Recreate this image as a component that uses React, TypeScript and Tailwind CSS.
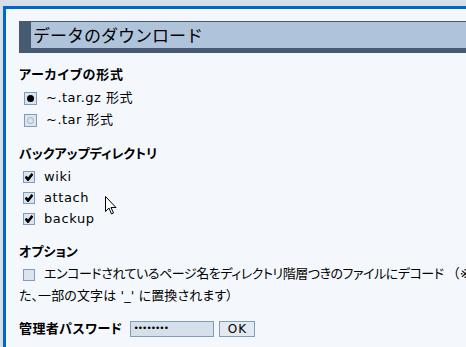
const latin = "font-['DejaVu_Sans','Noto_Sans_CJK_JP',sans-serif]";

function Radio({ checked, disabled }: { checked?: boolean; disabled?: boolean }) {
  return (
    <span className="inline-flex w-[13px] h-[13px] border border-[#7f9cc0] bg-[#dce5ef] items-center justify-center">
      {checked && <span className="w-[7px] h-[7px] rounded-full bg-black" />}
      {disabled && <span className="w-[7px] h-[7px] rounded-full border border-[#a8b0b8]" />}
    </span>
  );
}

function Check({ checked }: { checked?: boolean }) {
  return (
    <span className="inline-flex w-[12px] h-[12px] border border-[#7f9cc0] bg-[#dce5ef] items-center justify-center align-middle">
      {checked && (
        <svg width="8" height="8" viewBox="0 0 8 8">
          <path d="M0.6 3.6 L3 6.6 L7.5 0.8" stroke="#000" strokeWidth="2.6" fill="none" />
        </svg>
      )}
    </span>
  );
}

function Title({ children, wide }: { children: string; wide?: boolean }) {
  return (
    <div className={`h-5 leading-5 font-bold text-[13px] [font-feature-settings:'palt'] ${wide ? "tracking-[0.8px]" : ""}`}>
      {children}
    </div>
  );
}

export default function App() {
  return (
    <div className={`relative w-[466px] h-[347px] overflow-hidden bg-[#d6dee8] pt-[6px] pl-[3px] text-black ${latin}`}>
      <div className="h-full border-l-[3px] border-t-[3px] border-[#0066cc] bg-[#f4f8fc] pl-[13px] pt-[12px]">
        {/* heading */}
        <div className="w-[480px] h-[32px] border-t border-l-[12px] border-b-[5px] border-[#465a72] bg-[#afc4da] pl-[2px] leading-[26px] text-[17px] font-['Noto_Sans_CJK_JP',sans-serif]">
          データのダウンロード
        </div>

        <div className="mt-[12px]">
          <Title wide>アーカイブの形式</Title>
        </div>
        <div className="mt-[2px] pl-[5px]">
          <div className="h-[22px] flex items-center gap-[9px] text-[13px] tracking-[0.5px]">
            <Radio checked />
            <span>~.tar.gz 形式</span>
          </div>
          <div className="h-[22px] flex items-center gap-[9px] text-[13px] tracking-[0.5px]">
            <Radio disabled />
            <span>~.tar 形式</span>
          </div>
        </div>

        <div className="mt-[13px]">
          <Title>バックアップディレクトリ</Title>
        </div>
        <div className="mt-[2px] pl-[4px]">
          {["wiki", "attach", "backup"].map((d) => (
            <div key={d} className="h-[21px] flex items-center gap-[9px] text-[13px] tracking-[0.6px]">
              <Check checked />
              <span>{d}</span>
            </div>
          ))}
        </div>

        <div className="mt-[13px]">
          <Title>オプション</Title>
        </div>
        <div className="mt-px w-[480px] text-[13px] leading-[22px] whitespace-nowrap [font-feature-settings:'palt']">
          <span className="inline-block pl-[4px] pr-[9px]">
            <Check />
          </span>
          <span className="tracking-[-0.45px]">
            エンコードされているページ名をディレクトリ階層つきのファイルにデコード
          </span>
          <span className="pl-[3px] [font-feature-settings:normal]">（※ま</span>
          <br />
          <span className="tracking-[0.1px]">た、一部の文字は '_' に置換されます）</span>
        </div>

        <div className="mt-[12px] h-5 flex items-center">
          <span className="font-bold text-[13px] tracking-[0.4px] [font-feature-settings:'palt'] mr-[8px]">
            管理者パスワード
          </span>
          <span className="w-[84px] h-[16px] border border-[#7f9cc0] bg-[#d6e0ea] text-[9px] leading-[12px] pl-[2px] tracking-[-1px]">
            ••••••••
          </span>
          <button className="ml-[5px] w-[36px] h-[16px] border border-[#7f9cc0] bg-[#e2e9f1] text-[12px] leading-[14px] tracking-[1px]">
            OK
          </button>
        </div>
      </div>

      {/* mouse cursor */}
      <svg className="absolute left-[105px] top-[196px]" width="13" height="20" viewBox="0 0 13 20">
        <path d="M0.5 0.5 L0.5 15.5 L4 12 L6.5 18 L8.5 17 L6 11.5 L11 11.5 Z" fill="#fff" stroke="#000" strokeWidth="1" />
      </svg>
    </div>
  );
}
